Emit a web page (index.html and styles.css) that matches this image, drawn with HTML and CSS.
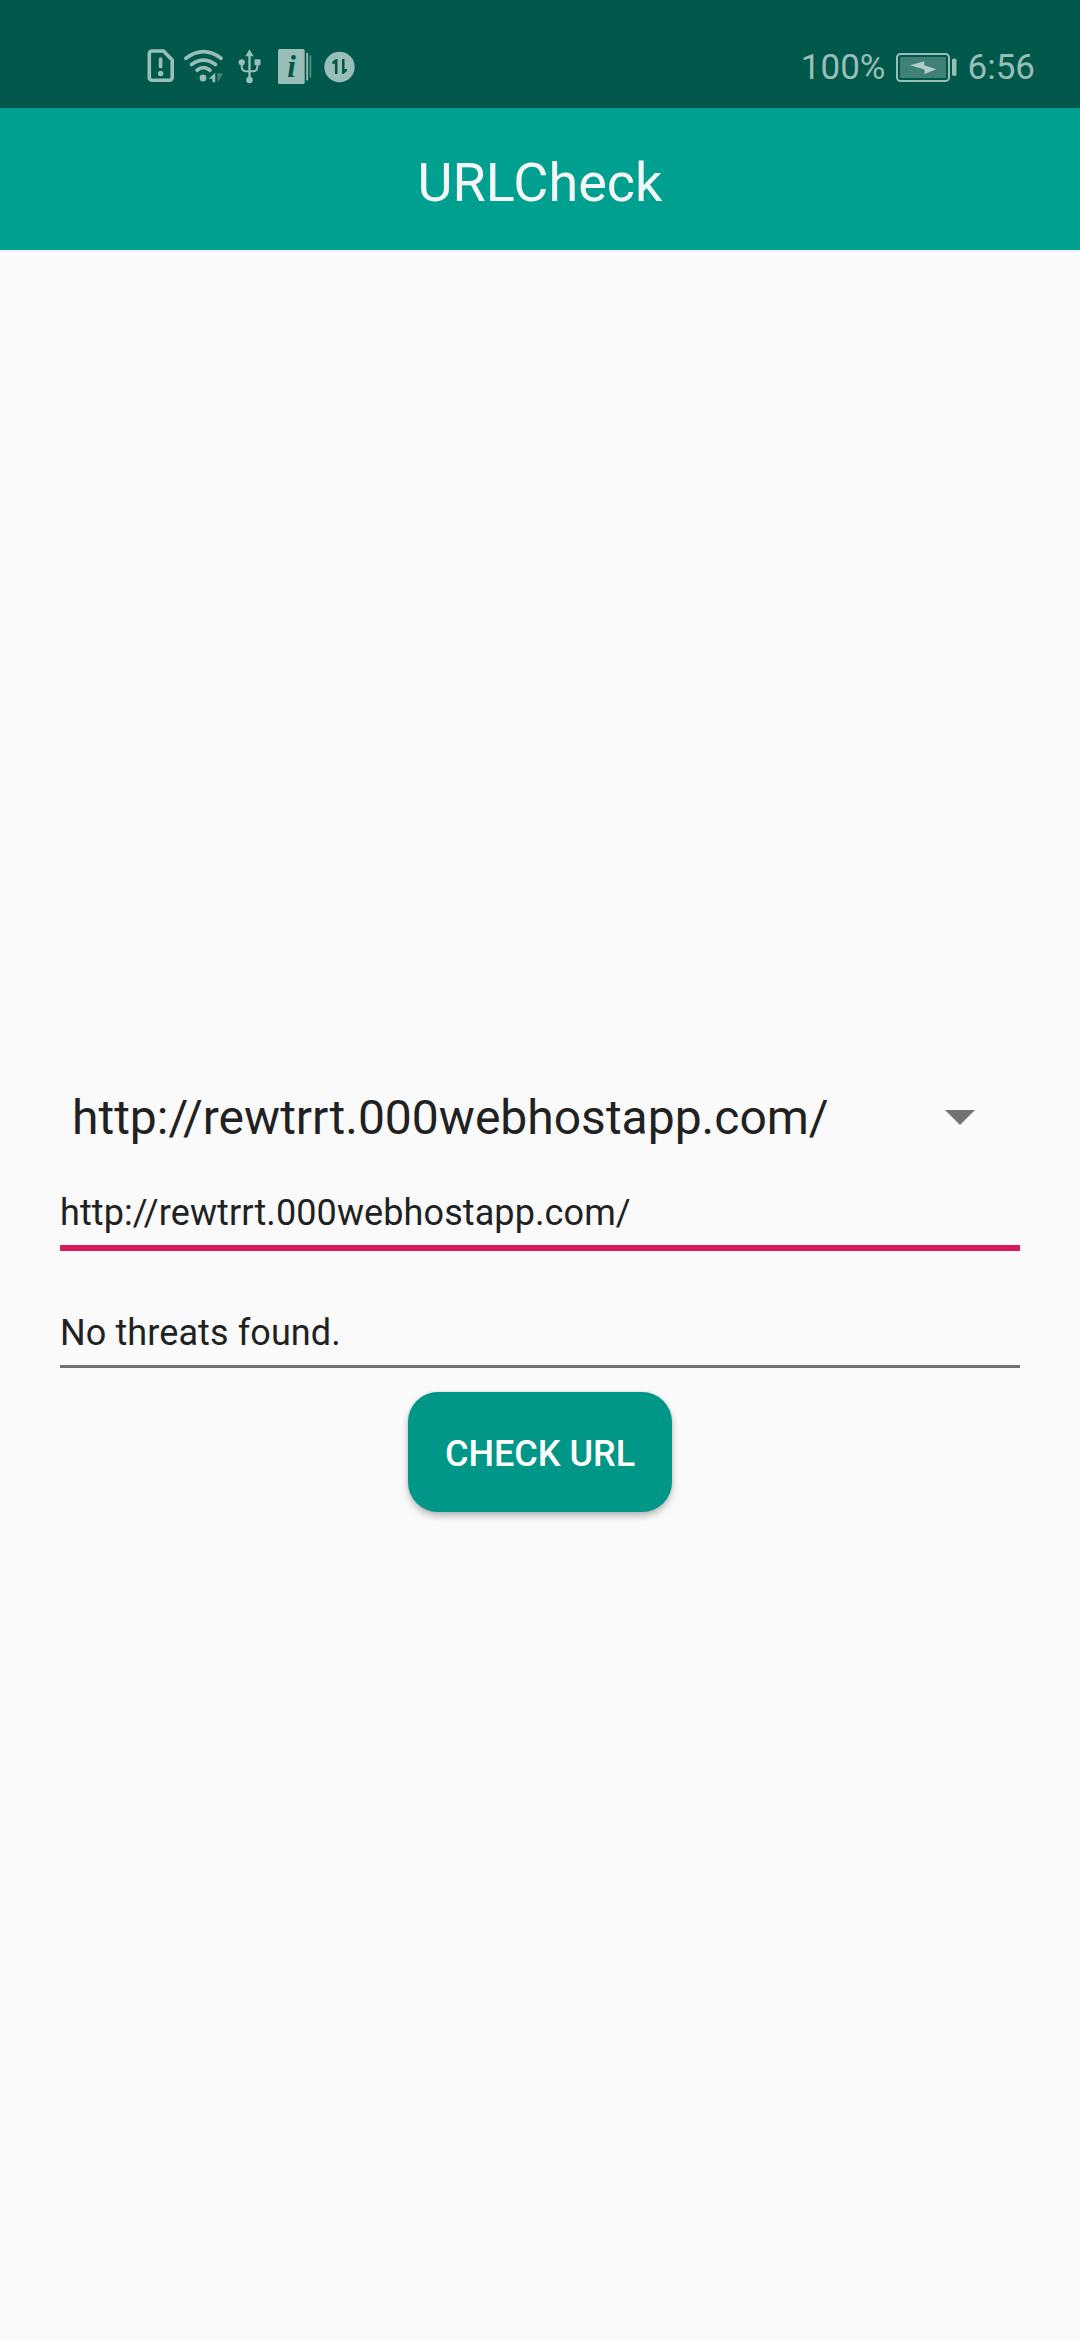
FILE: index.html
```html
<!DOCTYPE html>
<html lang="en">
<head>
<meta charset="utf-8">
<title>URLCheck</title>
<link rel="stylesheet" href="styles.css">
</head>
<body>
<div class="status-bar">
  <svg class="notifications" viewBox="146 43 212 48" width="212" height="48">
    <!-- SIM alert -->
    <path class="line" stroke-width="3.6" stroke-linejoin="round" d="M152 51h11.500l8.700 9v17.500a2.700 2.700 0 0 1-2.700 2.700H152a2.700 2.700 0 0 1-2.700-2.700V53.700a2.700 2.700 0 0 1 2.700-2.700z"/>
    <path class="line" stroke-width="3.700" stroke-linecap="round" d="M160.600 59v7.500"/>
    <circle class="solid" cx="160.600" cy="73.500" r="2.700"/>
    <!-- Wi-Fi -->
    <g class="line" stroke-width="3.700" stroke-linecap="round">
      <path d="M186 58.300q17.500-13.200 35 0"/>
      <path d="M191.500 64.500q12-8.800 24 0"/>
      <path d="M197 70.200q6.500-5.200 13 0"/>
    </g>
    <circle class="solid" cx="203" cy="78" r="3.400"/>
    <path class="solid" d="M208.700 78.700l6.500-6v9.500h-2.700v-3.500z"/>
    <path class="solid" opacity=".4" d="M217.300 73l5.700.4-3 5.600-2.700 3z"/>
    <!-- USB -->
    <g class="line" stroke-width="2">
      <path stroke-width="2.400" d="M249.500 55v25"/>
      <path d="M241.800 63v4q0 4 4 4.300h7.500q4-.3 4-4.300v-4"/>
    </g>
    <path class="solid" d="M249.500 49.300l4.200 7h-8.400z"/>
    <circle class="solid" cx="249.500" cy="80" r="3.300"/>
    <circle class="solid" cx="241.700" cy="62.300" r="3.100"/>
    <rect class="solid" x="254.500" y="59.300" width="6" height="6" rx=".8"/>
    <!-- Info cards -->
    <rect class="solid" x="278" y="49" width="26.700" height="35" rx="1.500"/>
    <path class="line" stroke-width="1.800" d="M307.200 53v27.500"/>
    <path class="line" stroke-width="1.500" opacity=".65" d="M310.400 55.500v22"/>
    <text class="info-mark" x="287.300" y="76.500">i</text>
    <!-- Data transfer -->
    <circle class="solid" cx="339.500" cy="67" r="15.200"/>
    <path class="cut" d="M334.900 74V63.700h-2.600v-2l3.700-2.700h1.500v15zM342 59h2.500v10h2.500v2l-3.500 3H342z"/>
  </svg>
  <div class="status-right">
    <span class="percent">100%</span>
    <svg class="battery" viewBox="894 51 62 31" width="62" height="31">
      <rect class="line" stroke-width="2" x="896" y="53" width="52" height="27" rx="3.500"/>
      <rect class="solid" opacity=".41" x="899" y="56" width="46" height="21" rx="1"/>
      <path class="bolt" d="M909 64.200l14.200-3.900v4l12.300 3.900-12 4.800v-4.500z"/>
      <rect class="solid" x="951" y="57.500" width="4.500" height="17.500" rx="1.800"/>
    </svg>
    <span class="clock">6:56</span>
  </div>
</div>
<header class="app-bar"><h1 class="title">URLCheck</h1></header>
<main class="content">
  <div class="spinner">
    <span>http://rewtrrt.000webhostapp.com/</span>
    <svg class="arrow" viewBox="0 0 30 15" width="30" height="15"><path d="M0 0h30L15 15z"/></svg>
  </div>
  <div class="field focused">http://rewtrrt.000webhostapp.com/</div>
  <div class="field">No threats found.</div>
  <button class="check" type="button">CHECK URL</button>
</main>
</body>
</html>
```

FILE: styles.css
```css
* { box-sizing: border-box; }

body {
  margin: 0;
  height: 2340px;
  background: #fafafa;
  color: #212121;
  font-family: Roboto, sans-serif;
  display: flex;
  flex-direction: column;
}

.status-bar {
  height: 108px;
  padding: 26px 45px 0 146px;
  display: flex;
  align-items: center;
  justify-content: space-between;
  background: #00584b;
  color: #99bdb7;
}

.status-bar svg { display: block; flex: none; }
.line { fill: none; stroke: #99bdb7; }
.solid { fill: #99bdb7; }
.cut { fill: #00584b; }
.bolt { fill: #b2cdc9; }

.info-mark {
  fill: #00584b;
  font: italic bold 31px "Liberation Serif", serif;
}

.status-right {
  display: flex;
  align-items: center;
  font-size: 35px;
  line-height: 44px;
}

.percent, .clock { padding-top: 2px; }
.battery { margin: 0 11px 0 9px; }

.app-bar {
  height: 142px;
  padding-top: 7px;
  display: flex;
  align-items: center;
  justify-content: center;
  background: #00a091;
  box-shadow: 0 2px 0 #f0f0f0;
}

.title {
  margin: 0;
  color: #f5f5f5;
  font-size: 54px;
  font-weight: 400;
  line-height: 64px;
}

.content {
  padding: 832px 60px 0;
  display: flex;
  flex-direction: column;
}

.spinner {
  height: 71px;
  padding: 0 45px 0 12px;
  display: flex;
  align-items: center;
  justify-content: space-between;
  font-size: 48px;
  line-height: 57px;
}

.arrow { fill: #737373; }

.field {
  height: 95px;
  margin-bottom: 24px;
  padding-top: 28px;
  border-bottom: 3px solid #737373;
  font-size: 36px;
  line-height: 65px;
  letter-spacing: .1px;
}

.focused {
  height: 98px;
  margin-bottom: 22px;
  border-bottom: 6px solid #d81b60;
}

.check {
  align-self: center;
  width: 264px;
  height: 120px;
  margin: 0;
  padding: 3px 0 0;
  border: 0;
  border-radius: 30px;
  background: #009688;
  box-shadow: 0 4px 7px rgba(0, 0, 0, .26), 0 0 3px rgba(0, 0, 0, .1);
  color: #fff;
  font: 500 36px/44px Roboto, sans-serif;
}
```
